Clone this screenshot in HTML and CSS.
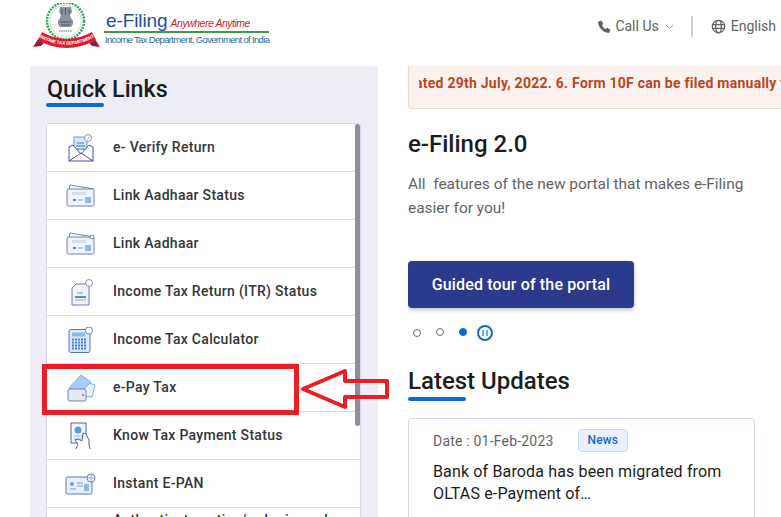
FILE: index.html
```html
<!DOCTYPE html>
<html lang="en">
<head>
  <meta charset="UTF-8">
  <meta name="viewport" content="width=device-width, initial-scale=1.0">
  <title>e-Filing - Quick Links</title>
  <link rel="stylesheet" href="styles.css">
</head>
<body>
  <header class="site-header">
    <div class="logo">
      <svg class="emblem" width="67" height="50" viewBox="0 0 67 50">
        <circle cx="32.500" cy="18" r="18.500" fill="none" stroke="#35a35a" stroke-width="2.500" stroke-dasharray="2 1"/>
        <circle cx="32.500" cy="18" r="15.800" fill="none" stroke="#bfe0c8" stroke-width="1"/>
        <path d="M27 4h11l1 5-2 3 1 3 2 3v3l-2 3H27l-2-3v-3l2-3 1-3-2-3z" fill="#8a93a3"/>
        <path d="M29 6v5M32.500 5v7M36 6v5M27 19h11M28 22h9" stroke="#3f4656" stroke-width=".8"/>
        <path d="M26 28h13" stroke="#666" stroke-width="1.200" stroke-dasharray="1.500 .7"/>
        <path d="M5 36 0 44l8-1 3-3z" fill="#c41428"/>
        <path d="M62 36l5 8-8-1-3-3z" fill="#c41428"/>
        <path d="M5 39 3 43l5-1zM62 39l2 4-5-1z" fill="#1f3f8f"/>
        <path d="M9 29Q33 43 59 29L63 37Q33 53 5 37Z" fill="#dc1a30"/>
        <path id="ribbon-line" d="M5 33.500Q33 50 63 33.500" fill="none"/>
        <text font-size="4.600" font-weight="700" fill="#fff" font-family="Roboto, sans-serif"><textPath href="#ribbon-line" startOffset="50%" text-anchor="middle">INCOME TAX DEPARTMENT</textPath></text>
      </svg>
      <div class="logo-text">
        <div class="logo-top"><span class="logo-name">e-Filing</span><span class="logo-tag">Anywhere Anytime</span></div>
        <div class="logo-sub">Income Tax Department, Government of India</div>
      </div>
    </div>
    <nav class="top-nav">
      <div class="nav-item">
        <svg width="15" height="15" viewBox="0 0 24 24"><path d="M6.600 2.500 10 7.200 8 10.300c1.200 2.500 3.200 4.500 5.700 5.700l3.100-2 4.700 3.400-1.300 3.900c-.3.800-1 1.200-1.800 1.100C10 21.600 2.400 14 1.600 5.600c-.1-.8.300-1.500 1.100-1.800z" fill="#5f6368"/></svg>
        <span>Call Us</span>
        <svg class="chevron" width="9" height="6" viewBox="0 0 9 6"><path d="M1 1l3.500 3.500L8 1" fill="none" stroke="#9a9a9a" stroke-width="1"/></svg>
      </div>
      <div class="nav-divider"></div>
      <div class="nav-item">
        <svg width="15" height="15" viewBox="0 0 24 24" fill="none" stroke="#5f6368" stroke-width="2"><circle cx="12" cy="12" r="10"/><ellipse cx="12" cy="12" rx="4.500" ry="10"/><path d="M2.500 9h19M2.500 15h19"/></svg>
        <span>English</span>
      </div>
    </nav>
  </header>

  <main class="content">
    <aside class="quick-links">
      <h2 class="section-title quick-title">Quick Links</h2>
      <div class="link-list">
        <div class="link-row">
          <svg class="link-icon" width="30" height="28" viewBox="0 0 30 28"><path d="M8 13V3h10l3 3v8" fill="#d6e6fa" stroke="#6f93dc"/><path d="M11 9h7" stroke="#5b6fb5"/><path d="M10 12h9M10 15h9" stroke="#5a9ae6" stroke-width="1.500"/><circle cx="22" cy="4" r="3.500" fill="#fff" stroke="#8a90ac"/><path d="M20.500 4l1.200 1L24 2.800" fill="none" stroke="#8a90ac" stroke-width=".8"/><path d="M3 13v14h24V13l-4-2-8 9-8-9z" fill="#fff" stroke="#3f51a0"/><path d="M3 27l12-8 12 8" fill="none" stroke="#3f51a0"/></svg>
          <span>e- Verify Return</span>
        </div>
        <div class="link-row">
          <svg class="link-icon" width="30" height="24" viewBox="0 0 30 24"><path d="M3 6 4 1l24 4" fill="none" stroke="#6f7fc0"/><rect x="1" y="5" width="27" height="17" rx="1.500" fill="#eef3fc" stroke="#6f7fc0"/><rect x="6" y="8" width="14" height="3" fill="#cfe0f8"/><path d="M7 16h3" stroke="#4f8ede" stroke-width="2"/><path d="M12 16h5" stroke="#b9cdee" stroke-width="2"/><rect x="19" y="13" width="6" height="6" fill="#8fb5ea"/></svg>
          <span>Link Aadhaar Status</span>
        </div>
        <div class="link-row">
          <svg class="link-icon" width="30" height="24" viewBox="0 0 30 24"><path d="M3 6 4 1l24 4" fill="none" stroke="#6f7fc0"/><rect x="1" y="5" width="27" height="17" rx="1.500" fill="#eef3fc" stroke="#6f7fc0"/><rect x="6" y="8" width="14" height="3" fill="#cfe0f8"/><path d="M7 16h3" stroke="#4f8ede" stroke-width="2"/><path d="M12 16h5" stroke="#b9cdee" stroke-width="2"/><rect x="19" y="13" width="6" height="6" fill="#8fb5ea"/><circle cx="26" cy="5" r="2" fill="#fff" stroke="#6f7fc0"/></svg>
          <span>Link Aadhaar</span>
        </div>
        <div class="link-row">
          <svg class="link-icon" width="30" height="28" viewBox="0 0 30 28"><path d="M10 6h13v21H6V10z" fill="#f0f3fb" stroke="#6f7fc0"/><path d="M11 15h6" stroke="#9fb4de" stroke-width="1.500"/><path d="M9 19h11" stroke="#4f8ede" stroke-width="2"/><path d="M9 22h11" stroke="#a8c6ee" stroke-width="1.500"/><circle cx="23" cy="5" r="3.500" fill="#fff" stroke="#8a90ac"/></svg>
          <span>Income Tax Return (ITR) Status</span>
        </div>
        <div class="link-row">
          <svg class="link-icon" width="30" height="27" viewBox="0 0 30 27"><rect x="3" y="3" width="21" height="23" rx="2" fill="#dbe7fa" stroke="#5b74c0"/><rect x="6" y="6" width="13" height="4" fill="#8fb5ea"/><path d="M6 13h15M6 16h15M6 19h15M6 22h15" stroke="#3d82dc" stroke-width="2" stroke-dasharray="2 1"/><circle cx="23" cy="4" r="3.500" fill="#fff" stroke="#6f7fc0"/></svg>
          <span>Income Tax Calculator</span>
        </div>
        <div class="link-row">
          <svg class="link-icon" width="30" height="28" viewBox="0 0 30 28"><path d="M16 6l13 5-3 12-10-1z" fill="#e8f1fc" stroke="#7fb2ee"/><path d="M3 14 15 1l10 7-10 10z" fill="#a8ccf3" stroke="#7fb2ee"/><rect x="2" y="15" width="18" height="12" rx="2" fill="#e6e6f4" stroke="#6f7fc0"/><circle cx="17" cy="21" r="1" fill="#6f7fc0"/></svg>
          <span>e-Pay Tax</span>
        </div>
        <div class="link-row">
          <svg class="link-icon" width="30" height="28" viewBox="0 0 30 28"><rect x="5" y="1" width="15" height="20" fill="#f3f6fd" stroke="#4f62ac"/><circle cx="12" cy="8" r="3.500" fill="#5a9ae6"/><path d="M8 14h8M8 17h8" stroke="#8fb5ea"/><path d="M10 27l2-5-3-4 3-1 4 2 1-8 3 1 3 6v5l1 4" fill="#fff" stroke="#4f62ac"/></svg>
          <span>Know Tax Payment Status</span>
        </div>
        <div class="link-row">
          <svg class="link-icon" width="32" height="22" viewBox="0 0 32 22"><rect x="1" y="4" width="26" height="17" rx="1.500" fill="#e6f0fc" stroke="#5b74c0"/><circle cx="7" cy="11" r="2" fill="#6aa0e8"/><path d="M5 16h6M12 10h6M12 13h6" stroke="#6aa0e8"/><rect x="19" y="11" width="5" height="7" fill="#8fb5ea"/><circle cx="26" cy="5" r="4" fill="#fff" stroke="#6f7fc0"/><path d="M22 5h8M26 1v8" stroke="#6f7fc0" stroke-width=".7"/></svg>
          <span>Instant E-PAN</span>
        </div>
        <div class="link-row">
          <span class="two-line">Authenticate notice/order issued by ITD</span>
        </div>
        <div class="scroll-thumb"></div>
      </div>
    </aside>

    <section class="main-column">
      <div class="ticker"><div class="ticker-clip"><span>ated 29th July, 2022. 6. Form 10F can be filed manually till 31st March 2023.</span></div></div>
      <h2 class="slide-title">e-Filing 2.0</h2>
      <p class="slide-text">All&nbsp; features of the new portal that makes e-Filing easier for you!</p>
      <button class="tour-btn">Guided tour of the portal</button>
      <div class="dots">
        <span class="dot"></span>
        <span class="dot dot-raised"></span>
        <span class="dot dot-active"></span>
        <span class="pause"><i></i><i></i></span>
      </div>
      <h2 class="section-title updates-title">Latest Updates</h2>
      <article class="update-card">
        <div class="update-meta">
          <span class="update-date">Date : 01-Feb-2023</span>
          <span class="badge">News</span>
        </div>
        <p class="update-text">Bank of Baroda has been migrated from OLTAS e-Payment of…</p>
      </article>
    </section>
  </main>

  <!-- red annotation drawn over the screenshot -->
  <div class="mark-box"></div>
  <svg class="mark-arrow" width="90" height="44" viewBox="0 0 90 44">
    <path d="M3 22 45 4V14H87V30H45V40Z" fill="none" stroke="#ee1c25" stroke-width="4" stroke-linejoin="round"/>
  </svg>
</body>
</html>
```

FILE: styles.css
```css
/* General Styles */
html, body {
  height: 517px;
  overflow: hidden;
}

body {
  font-family: Roboto, "Liberation Sans", sans-serif;
  margin: 0;
  padding: 0;
  background-color: white;
  color: #1b1c20;
  position: relative;
}

/* Header */
.site-header {
  height: 66px;
  display: flex;
  justify-content: space-between;
  align-items: flex-start;
}

.logo {
  display: flex;
  align-items: flex-start;
  margin-left: 33px;
  padding-top: 3px;
}

.logo-text {
  margin-left: 4px;
  padding-top: 8px;
  width: 165px;
}

.logo-top {
  display: flex;
  align-items: baseline;
  height: 20px;
  padding-left: 2px;
  border-bottom: 2px solid #3f9b4a;
  white-space: nowrap;
}

.logo-name {
  font-family: "Liberation Sans", sans-serif;
  font-size: 19px;
  letter-spacing: -0.1px;
  color: #1d4f91;
  line-height: 20px;
}

.logo-tag {
  font-family: "Liberation Sans", sans-serif;
  font-style: italic;
  font-size: 10.500px;
  letter-spacing: -0.48px;
  color: #d3182c;
  margin-left: 3px;
}

.logo-sub {
  font-family: "Liberation Sans", sans-serif;
  font-size: 9.500px;
  letter-spacing: -0.66px;
  color: #2a6a94;
  line-height: 14px;
  padding-left: 1px;
  white-space: nowrap;
}

.top-nav {
  display: flex;
  align-items: center;
  height: 22px;
  margin-top: 15px;
  margin-right: 5px;
  font-size: 14px;
  color: #5f6368;
}

.nav-item {
  display: flex;
  align-items: center;
  gap: 3px;
}

.chevron {
  margin-left: 3px;
  margin-top: 2px;
}

.nav-divider {
  width: 2px;
  height: 21px;
  background-color: #cfcfcf;
  margin: 0 18px 0 17px;
}

.nav-item + .nav-divider + .nav-item {
  gap: 5px;
}

/* Page columns */
.content {
  display: flex;
  align-items: flex-start;
  height: 451px;
}

.quick-links {
  width: 348px;
  height: 451px;
  margin-left: 30px;
  padding: 9px 16px 0;
  box-sizing: border-box;
  background-color: #ecedf5;
  overflow: hidden;
}

.section-title {
  position: relative;
  margin: 0;
  font-size: 24px;
  font-weight: 500;
  line-height: 28px;
  padding-bottom: 6px;
}

.section-title::after {
  content: "";
  position: absolute;
  left: 0;
  bottom: 0;
  width: 58px;
  height: 4px;
  border-radius: 2px;
  background-color: #0b6bd3;
}

.quick-title {
  font-size: 23.300px;
  padding-bottom: 4px;
  padding-left: 1px;
}

.link-list {
  position: relative;
  width: 315px;
  margin-top: 16px;
  box-sizing: border-box;
  background-color: white;
  border: 1px solid #d8d8e8;
  border-radius: 3px;
}

.link-row {
  height: 48px;
  box-sizing: border-box;
  display: flex;
  align-items: center;
  padding-left: 66px;
  padding-right: 20px;
  position: relative;
  border-bottom: 1px solid #d8d8e8;
  font-size: 14px;
  font-weight: 500;
  letter-spacing: 0.3px;
  color: #34353a;
}

.link-row span {
  margin-bottom: 2px;
}

.link-icon {
  position: absolute;
  left: 34px;
  top: 50%;
  transform: translate(-50%, -50%);
}

.two-line {
  line-height: 22px;
}

.scroll-thumb {
  position: absolute;
  top: 0;
  right: 0;
  width: 5px;
  height: 302px;
  border-radius: 3px;
  background-color: #8e8e98;
}

/* Right column */
.main-column {
  flex: 1;
  min-width: 0;
  height: 451px;
  margin-left: 30px;
  overflow: hidden;
}

.ticker {
  height: 43px;
  box-sizing: border-box;
  padding-left: 10px;
  background-color: #fbf2ef;
  border: 1px solid #f3d6c8;
  border-top: none;
  border-right: none;
  border-radius: 0 0 0 4px;
  font-size: 14px;
  font-weight: 700;
  letter-spacing: 0.25px;
  color: #b9471c;
}

.ticker-clip {
  overflow: hidden;
  white-space: nowrap;
  line-height: 34px;
}

.ticker-clip span {
  display: inline-block;
  margin-left: -4px;
}

.slide-title {
  margin: 21px 0 0;
  font-size: 24px;
  font-weight: 500;
  line-height: 28px;
}

.slide-text {
  margin: 14px 0 0;
  width: 372px;
  font-size: 15.450px;
  line-height: 24px;
  color: #5f6368;
}

.tour-btn {
  display: block;
  margin-top: 41px;
  width: 226px;
  height: 47px;
  padding: 0;
  border: none;
  border-radius: 4px;
  background-color: #2b3a8c;
  box-shadow: 0 2px 4px rgba(0, 0, 0, 0.25);
  color: white;
  font-family: inherit;
  font-size: 16px;
  letter-spacing: 0.15px;
  font-weight: 500;
}

.dots {
  display: flex;
  align-items: center;
  height: 18px;
  margin: 16px 0 0 5px;
}

.dot {
  width: 8px;
  height: 8px;
  box-sizing: border-box;
  border: 1.500px solid #666;
  border-radius: 50%;
  margin-right: 15px;
}

.dot-raised {
  margin-top: -2px;
}

.dot-active {
  margin-top: -2px;
  margin-right: 10px;
  background-color: #0b6bd3;
  border-color: #0b6bd3;
}

.pause {
  width: 16px;
  height: 16px;
  box-sizing: border-box;
  border: 2px solid #0b6bd3;
  border-radius: 50%;
  display: flex;
  align-items: center;
  justify-content: center;
  gap: 2px;
}

.pause i {
  width: 2px;
  height: 6px;
  background-color: #6ea8ea;
}

.updates-title {
  margin-top: 25px;
}

.update-card {
  width: 347px;
  height: 140px;
  margin-top: 17px;
  padding: 10px 24px;
  box-sizing: border-box;
  border: 1px solid #d8d8e8;
  border-radius: 4px;
}

.update-meta {
  display: flex;
  align-items: center;
  height: 23px;
  font-size: 14px;
  letter-spacing: 0.2px;
  color: #5f6368;
}

.badge {
  margin-left: 24px;
  padding: 0 9px;
  height: 23px;
  line-height: 20px;
  box-sizing: border-box;
  background-color: #e8f1fc;
  border: 1px solid #c3dcf6;
  border-radius: 4px;
  font-weight: 500;
  font-size: 12px;
  letter-spacing: 0.1px;
  color: #1a66d0;
}

.update-text {
  margin: 9px 0 0;
  font-size: 16px;
  letter-spacing: 0.15px;
  line-height: 22px;
  color: #1b1c20;
}

/* Annotation */
.mark-box {
  position: absolute;
  left: 42px;
  top: 364px;
  width: 257px;
  height: 51px;
  box-sizing: border-box;
  border: 5px solid #ee1c25;
}

.mark-arrow {
  position: absolute;
  left: 300px;
  top: 367px;
}
```
